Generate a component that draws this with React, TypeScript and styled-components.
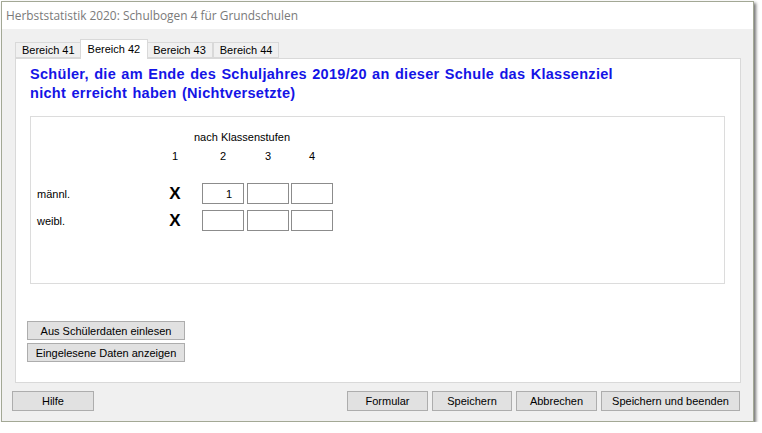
import React from "react";
import styled, { createGlobalStyle } from "styled-components";

const Global = createGlobalStyle`
  html, body { margin: 0; padding: 0; background: #ffffff; }
  body { font-family: "Liberation Sans", Arial, sans-serif; }
`;

const Window = styled.div`
  margin: 1px 0 0 1px;
  width: 753px;
  height: 421px;
  box-sizing: border-box;
  border: 1px solid #a3a895;
  box-shadow: 2px 2px 3px rgba(0, 0, 0, 0.55);
  display: flex;
  flex-direction: column;
  background: #f0f0f0;
`;

const TitleBar = styled.div`
  height: 27px;
  flex: none;
  background: #ffffff;
  display: flex;
  align-items: center;
  padding: 0 0 2px 4px;
  box-sizing: border-box;
  font-family: "Open Sans", "Noto Sans", sans-serif;
  font-size: 11.9px;
  color: #7a7a7a;
`;

const Body = styled.div`
  flex: 1;
  display: flex;
  flex-direction: column;
  padding: 10px 13px 10px 13px;
`;

const TabStrip = styled.div`
  display: flex;
  align-items: flex-end;
  height: 19px;
`;

const Tab = styled.div<{ $active?: boolean }>`
  position: relative;
  box-sizing: border-box;
  height: ${(p) => (p.$active ? "20px" : "16px")};
  margin: ${(p) => (p.$active ? "0 -2px -1px -2px" : "0")};
  z-index: ${(p) => (p.$active ? 2 : 1)};
  padding: ${(p) => (p.$active ? "0 7px 2px" : "0 6px")};
  border: 1px solid #d9d9d9;
  border-bottom: ${(p) => (p.$active ? "none" : "1px solid #d9d9d9")};
  background: ${(p) => (p.$active ? "#ffffff" : "#f0f0f0")};
  font-size: 11px;
  color: #000;
  display: flex;
  align-items: center;
  white-space: nowrap;
`;

const Panel = styled.div`
  height: 325px;
  margin-right: -1px;
  box-sizing: border-box;
  border: 1px solid #d9d9d9;
  background: #ffffff;
  padding: 6px 15px 0 14px;
  display: flex;
  flex-direction: column;
`;

const Heading = styled.div`
  font-size: 14.5px;
  font-weight: bold;
  line-height: 19px;
  letter-spacing: 0.3px;
  word-spacing: 1px;
  color: #1414e6;
`;

const GroupBox = styled.div`
  margin-top: 13px;
  height: 168px;
  box-sizing: border-box;
  border: 1px solid #dcdcdc;
  padding: 13px 0 0 6px;
`;

const Grid = styled.div`
  display: grid;
  grid-template-columns: 117px 48px 45px 44px 43px;
  align-items: center;
  font-size: 11px;
  color: #000;
`;

const GroupCaption = styled.div`
  grid-column: 2 / span 4;
  text-align: center;
  line-height: 14px;
  padding-right: 4px;
`;

const ColNum = styled.div`
  width: 42px;
  text-align: center;
  line-height: 14px;
  margin-top: 5px;
`;

const RowLabel = styled.div<{ $top: number }>`
  margin-top: ${(p) => p.$top}px;
  line-height: 14px;
`;

const Cross = styled.div<{ $top: number }>`
  margin-top: ${(p) => p.$top}px;
  width: 42px;
  text-align: center;
  font-size: 17px;
  font-weight: bold;
  line-height: 21px;
`;

const NumBox = styled.div<{ $top: number }>`
  margin-top: ${(p) => p.$top}px;
  width: 42px;
  height: 21px;
  box-sizing: border-box;
  border: 1px solid #8c8c8c;
  background: #fff;
  font-size: 11px;
  display: flex;
  align-items: center;
  justify-content: flex-end;
  padding-right: 11px;
`;

const SideButtons = styled.div`
  margin-top: 37px;
  margin-left: -3px;
  display: flex;
  flex-direction: column;
  gap: 3px;
`;

const Button = styled.div<{ $w: number; $h?: number }>`
  width: ${(p) => p.$w}px;
  height: ${(p) => p.$h ?? 20}px;
  box-sizing: border-box;
  border: 1px solid #adadad;
  background: #e1e1e1;
  font-size: 11px;
  color: #000;
  display: flex;
  align-items: center;
  justify-content: center;
  white-space: nowrap;
`;

const Footer = styled.div`
  margin-top: 8px;
  display: flex;
  align-items: center;
  margin-left: -3px;
`;

const FooterRight = styled.div`
  margin-left: auto;
  display: flex;
  gap: 4px;
`;

const rows = [
  { label: "männl.", values: ["1", "", ""], top: 20 },
  { label: "weibl.", values: ["", "", ""], top: 6 },
];

export default function App() {
  return (
    <>
      <Global />
      <Window>
        <TitleBar>Herbststatistik 2020: Schulbogen 4 für Grundschulen</TitleBar>
        <Body>
          <TabStrip>
            <Tab>Bereich 41</Tab>
            <Tab $active>Bereich 42</Tab>
            <Tab>Bereich 43</Tab>
            <Tab>Bereich 44</Tab>
          </TabStrip>
          <Panel>
            <Heading>
              Schüler, die am Ende des Schuljahres 2019/20 an dieser Schule das Klassenziel
              <br />
              nicht erreicht haben (Nichtversetzte)
            </Heading>
            <GroupBox>
              <Grid>
                <div />
                <GroupCaption>nach Klassenstufen</GroupCaption>
                <div />
                {["1", "2", "3", "4"].map((n) => (
                  <ColNum key={n}>{n}</ColNum>
                ))}
                {rows.map((r) => (
                  <React.Fragment key={r.label}>
                    <RowLabel $top={r.top}>{r.label}</RowLabel>
                    <Cross $top={r.top}>X</Cross>
                    {r.values.map((v, i) => (
                      <NumBox key={i} $top={r.top}>
                        {v}
                      </NumBox>
                    ))}
                  </React.Fragment>
                ))}
              </Grid>
            </GroupBox>
            <SideButtons>
              <Button $w={158} $h={19}>Aus Schülerdaten einlesen</Button>
              <Button $w={158} $h={19}>Eingelesene Daten anzeigen</Button>
            </SideButtons>
          </Panel>
          <Footer>
            <Button $w={82}>Hilfe</Button>
            <FooterRight>
              <Button $w={81}>Formular</Button>
              <Button $w={80}>Speichern</Button>
              <Button $w={81}>Abbrechen</Button>
              <Button $w={139}>Speichern und beenden</Button>
            </FooterRight>
          </Footer>
        </Body>
      </Window>
    </>
  );
}
